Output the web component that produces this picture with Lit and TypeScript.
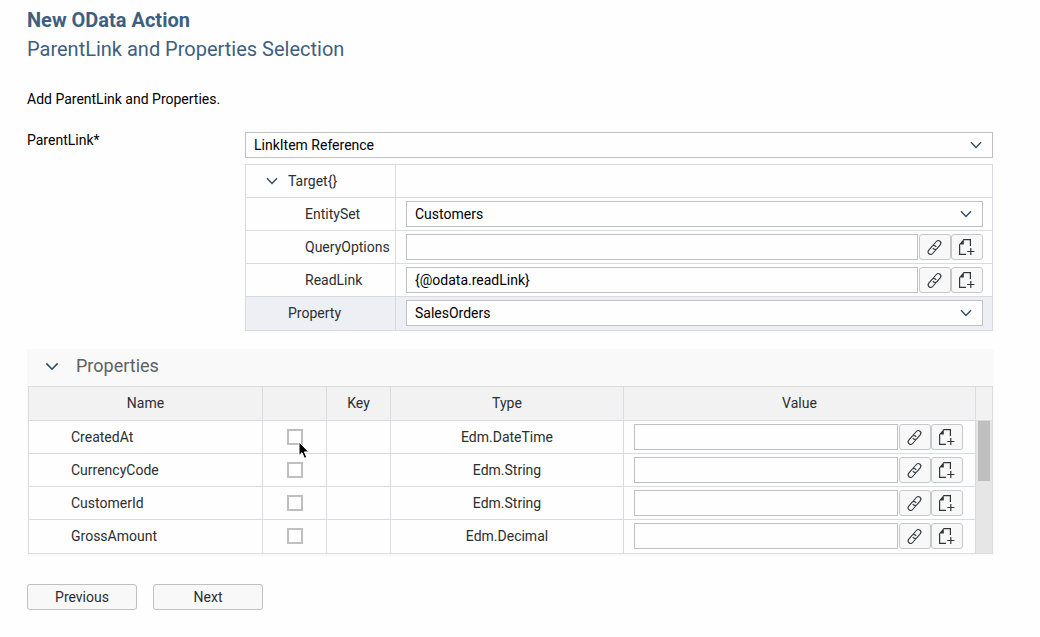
import { LitElement, html, css, svg } from "lit";
import { customElement, property, state } from "lit/decorators.js";
import { classMap } from "lit/directives/class-map.js";

const base = css`
  :host {
    display: block;
    box-sizing: border-box;
    font-family: Roboto, "Liberation Sans", sans-serif;
    font-size: 14px;
    line-height: 20px;
    color: #2c2e30;
  }
  *,
  *::before,
  *::after {
    box-sizing: border-box;
  }
  button,
  input,
  select {
    font: inherit;
    margin: 0;
  }
`;

const chevron = (cls: string) => html`
  <svg class=${cls} viewBox="0 0 12 8" aria-hidden="true">
    <path d="M1 1.2 6 6.4 11 1.2" fill="none" stroke="#2f4d66" stroke-width="1.4" />
  </svg>
`;

const linkIcon = svg`
  <g transform="rotate(-49 8 8)" fill="none" stroke="#32363a" stroke-width="1.05">
    <path d="M7.6 10.4H2.6a2.4 2.4 0 0 1 0-4.8h4.6a2.4 2.4 0 0 1 2.3 3.2" />
    <path d="M8.4 5.6h5a2.4 2.4 0 0 1 0 4.8h-4.6a2.4 2.4 0 0 1-2.3-3.2" />
  </g>
`;

const addDocumentIcon = svg`
  <path d="M1.6 5.2V15.4H8M5.4 .6h7V7" fill="none" stroke="#32363a" stroke-width="1.2" />
  <path d="M1 5.6 5.8 0v5.6z" fill="#32363a" />
  <path d="M12.8 9v7M9.2 12.5h7.2" fill="none" stroke="#32363a" stroke-width="1.2" />
`;

@customElement("drop-down")
export class DropDown extends LitElement {
  @property() label = "";
  @property() value = "";

  static styles = [
    base,
    css`
      .wrap {
        display: grid;
        align-items: center;
      }
      .select,
      .arrow {
        grid-area: 1 / 1;
      }
      .select {
        appearance: none;
        width: 100%;
        height: 26px;
        padding: 0 32px 0 8px;
        border: 1px solid #bfc0c2;
        border-radius: 0;
        background: #fefefe;
        color: #000;
      }
      .arrow {
        justify-self: end;
        width: 12px;
        height: 8px;
        margin-right: 11px;
        pointer-events: none;
      }
    `,
  ];

  render() {
    return html`
      <div class="wrap">
        <select class="select" aria-label=${this.label}>
          <option>${this.value}</option>
        </select>
        ${chevron("arrow")}
      </div>
    `;
  }
}

@customElement("value-field")
export class ValueField extends LitElement {
  @property() label = "";
  @property() value = "";

  static styles = [
    base,
    css`
      .wrap {
        display: flex;
      }
      .input {
        flex: 1;
        min-width: 0;
        height: 26px;
        padding: 0 8px;
        border: 1px solid #bfc0c2;
        border-radius: 0;
        background: #fefefe;
        color: #000;
        margin-right: 1px;
      }
      .button {
        display: grid;
        place-items: center;
        width: 32px;
        height: 26px;
        padding: 0 2px 0 0;
        border: 1px solid #c6c7c9;
        border-radius: 3px;
        background: #f8f8f8;
      }
      .icon {
        width: 17px;
        height: 17px;
        overflow: visible;
      }
    `,
  ];

  render() {
    return html`
      <div class="wrap">
        <input class="input" type="text" aria-label=${this.label} .value=${this.value} />
        <button class="button" type="button" aria-label="Link ${this.label}">
          <svg class="icon" viewBox="0 0 16 16">${linkIcon}</svg>
        </button>
        <button class="button" type="button" aria-label="Create ${this.label}">
          <svg class="icon" viewBox="0 0 17 17">${addDocumentIcon}</svg>
        </button>
      </div>
    `;
  }
}

interface TargetRow {
  name: string;
  kind: "group" | "select" | "field";
  level: "top" | "child";
  value?: string;
  selected?: boolean;
}

const targetRows: TargetRow[] = [
  { name: "Target{}", kind: "group", level: "top" },
  { name: "EntitySet", kind: "select", level: "child", value: "Customers" },
  { name: "QueryOptions", kind: "field", level: "child", value: "" },
  { name: "ReadLink", kind: "field", level: "child", value: "{@odata.readLink}" },
  { name: "Property", kind: "select", level: "top", value: "SalesOrders", selected: true },
];

const propertyRows = [
  { name: "CreatedAt", type: "Edm.DateTime" },
  { name: "CurrencyCode", type: "Edm.String" },
  { name: "CustomerId", type: "Edm.String" },
  { name: "GrossAmount", type: "Edm.Decimal" },
];

@customElement("app-root")
export class AppRoot extends LitElement {
  @state() private chosen = new Set<string>();

  static styles = [
    base,
    css`
      :host {
        min-height: 100vh;
        padding: 8px 46px 24px 27px;
        background: #fefefe;
      }
      .title,
      .subtitle {
        margin: 0;
        font-size: 20px;
        line-height: 24px;
        color: #3f5f7e;
      }
      .subtitle {
        margin-top: 5px;
        font-weight: 400;
      }
      .intro {
        margin: 28px 0 21px;
        color: #000;
      }
      .form {
        display: grid;
        grid-template-columns: 218px 1fr;
        padding-right: 1px;
      }
      .form-label {
        color: #000;
      }
      .form-body {
        padding-top: 2px;
      }
      .tree,
      .grid {
        width: 100%;
        border-collapse: separate;
        border-spacing: 0;
        table-layout: fixed;
      }
      .tree {
        margin-top: 6px;
        border: 1px solid #d9dbe3;
      }
      .tree th,
      .tree td {
        height: 33px;
        padding: 0;
        border-bottom: 1px solid #d9dbe3;
      }
      .tree .key {
        width: 150px;
        border-right: 1px solid #d9dbe3;
        text-align: left;
        font-weight: 400;
      }
      .tree .val {
        padding: 0 9px 0 10px;
      }
      .tree tr:last-child > .key,
      .tree tr:last-child > .val {
        border-bottom: 0;
        padding-bottom: 1px;
      }
      .selected {
        background: #eeeff5;
      }
      .key-inner {
        display: flex;
        align-items: center;
        padding-left: 42px;
      }
      .key-inner.child {
        padding-left: 59px;
      }
      .key-inner.group {
        padding-left: 20px;
        gap: 10px;
      }
      .toggle {
        display: grid;
        place-items: center;
        width: 12px;
        padding: 0;
        border: 0;
        background: none;
      }
      .small-chevron {
        width: 12px;
        height: 8px;
      }
      .panel {
        margin-top: 18px;
        padding: 0 0 2px;
        background: #f9f9f9;
      }
      .panel-header {
        display: flex;
        align-items: center;
        gap: 17px;
        height: 37px;
        padding: 0 18px 3px;
      }
      .panel-title {
        margin: 0;
        font-size: 18px;
        line-height: 24px;
        font-weight: 400;
        color: #5e6164;
      }
      .big-chevron {
        width: 14px;
        height: 9px;
      }
      .panel-toggle {
        display: grid;
        width: 14px;
        padding: 0;
        border: 0;
        background: none;
      }
      .grid-wrap {
        display: grid;
        grid-template-columns: 1fr 16px;
        margin: 0 1px;
        border: 1px solid #dcdde1;
        background: #fefefe;
      }
      .grid th,
      .grid td {
        height: 33px;
        padding: 0;
        border-right: 1px solid #d9dbe3;
        border-bottom: 1px solid #d9dbe3;
        text-align: center;
        font-weight: 400;
      }
      .grid thead th {
        height: 34px;
        padding-bottom: 1px;
        background: #f2f2f2;
      }
      .col-name {
        width: 234px;
      }
      .col-small {
        width: 64px;
      }
      .col-type {
        width: 233px;
      }
      .grid .name {
        padding-left: 42px;
        text-align: left;
      }
      .grid .value {
        padding: 0 12px 0 10px;
      }
      .grid tbody tr:last-child > td {
        border-bottom: 0;
        padding-bottom: 1px;
      }
      .check {
        appearance: none;
        display: block;
        width: 16px;
        height: 16px;
        margin: 0 auto;
        border: 2px solid #bfbfbf;
        background: #fefefe;
      }
      .check:checked {
        background: #3f5f7e;
      }
      .scroll-head {
        height: 34px;
        border-bottom: 1px solid #d9dbe3;
        background: #f2f2f2;
      }
      .scroll {
        display: flex;
        flex-direction: column;
      }
      .track {
        flex: 1;
        padding: 0 2px;
        background: #e6e6e6;
      }
      .thumb {
        height: 60px;
        background: #bfbfbf;
      }
      .footer {
        display: flex;
        gap: 16px;
        margin-top: 28px;
      }
      .action {
        width: 110px;
        height: 26px;
        padding: 0;
        border: 1px solid #bfc0c2;
        border-radius: 3px;
        background: #f8f8f8;
        color: #2c2e30;
      }
      .check-box {
        position: relative;
        width: 16px;
        margin: 0 auto;
      }
      .pointer {
        position: absolute;
        left: 10px;
        top: 12px;
        width: 14px;
        height: 20px;
        pointer-events: none;
      }
    `,
  ];

  private toggle(name: string) {
    const next = new Set(this.chosen);
    next.has(name) ? next.delete(name) : next.add(name);
    this.chosen = next;
  }

  private targetRow(row: TargetRow) {
    return html`
      <tr class=${classMap({ selected: !!row.selected })}>
        <th class="key" scope="row">
          <div class=${classMap({ "key-inner": true, child: row.level === "child", group: row.kind === "group" })}>
            ${row.kind === "group"
              ? html`<button class="toggle" type="button" aria-label="Collapse">${chevron("small-chevron")}</button>`
              : ""}
            <span>${row.name}</span>
          </div>
        </th>
        <td class="val">
          ${row.kind === "select"
            ? html`<drop-down label=${row.name} value=${row.value}></drop-down>`
            : row.kind === "field"
              ? html`<value-field label=${row.name} value=${row.value}></value-field>`
              : ""}
        </td>
      </tr>
    `;
  }

  render() {
    return html`
      <h1 class="title">New OData Action</h1>
      <h2 class="subtitle">ParentLink and Properties Selection</h2>
      <p class="intro">Add ParentLink and Properties.</p>

      <div class="form">
        <div class="form-label">ParentLink*</div>
        <div class="form-body">
          <drop-down label="ParentLink" value="LinkItem Reference"></drop-down>
          <table class="tree">
            <tbody>
              ${targetRows.map((row) => this.targetRow(row))}
            </tbody>
          </table>
        </div>
      </div>

      <section class="panel">
        <div class="panel-header">
          <button class="panel-toggle" type="button" aria-label="Collapse Properties">
            ${chevron("big-chevron")}
          </button>
          <h3 class="panel-title">Properties</h3>
        </div>
        <div class="grid-wrap">
          <table class="grid">
            <thead>
              <tr>
                <th class="col-name" scope="col">Name</th>
                <th class="col-small" scope="col" aria-label="Selected"></th>
                <th class="col-small" scope="col">Key</th>
                <th class="col-type" scope="col">Type</th>
                <th scope="col">Value</th>
              </tr>
            </thead>
            <tbody>
              ${propertyRows.map(
                (row, i) => html`
                  <tr>
                    <td class="name">${row.name}</td>
                    <td>
                      <div class="check-box">
                        <input
                          class="check"
                          type="checkbox"
                          aria-label=${row.name}
                          .checked=${this.chosen.has(row.name)}
                          @change=${() => this.toggle(row.name)}
                        />
                        ${i === 0
                          ? html`<svg class="pointer" viewBox="0 0 14 20" aria-hidden="true">
                              <path
                                d="M2 1v13.5l3-2.8 2.4 5.6 2.4-1-2.4-5.4h4.3z"
                                fill="#000"
                                stroke="#fff"
                                stroke-width="1"
                              />
                            </svg>`
                          : ""}
                      </div>
                    </td>
                    <td></td>
                    <td>${row.type}</td>
                    <td class="value"><value-field label=${row.name}></value-field></td>
                  </tr>
                `,
              )}
            </tbody>
          </table>
          <div class="scroll">
            <div class="scroll-head"></div>
            <div class="track"><div class="thumb"></div></div>
          </div>
        </div>
      </section>

      <div class="footer">
        <button class="action" type="button">Previous</button>
        <button class="action" type="button">Next</button>
      </div>
    `;
  }
}
